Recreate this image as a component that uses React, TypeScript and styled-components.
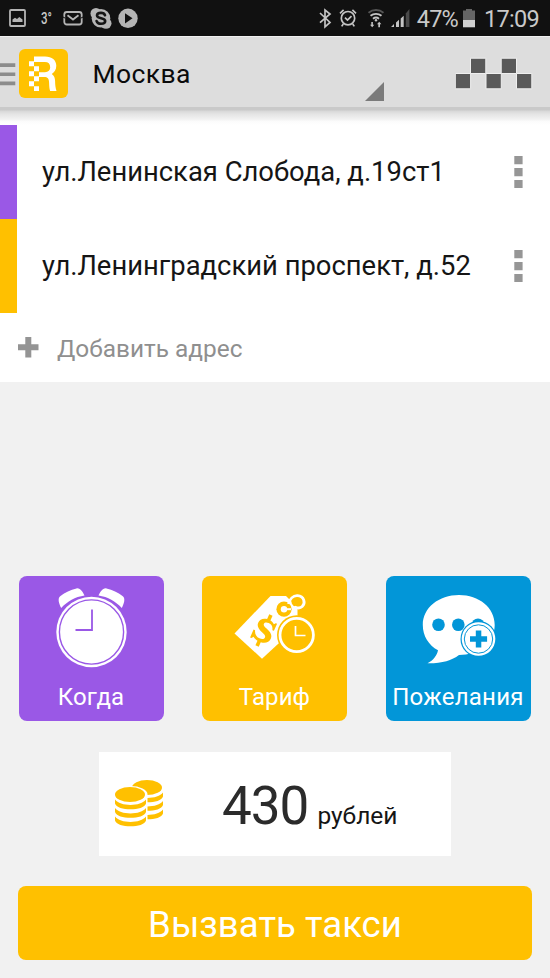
import React from "react";
import styled, { createGlobalStyle } from "styled-components";

const colors = {
  purple: "#9a58e6",
  amber: "#ffc000",
  blue: "#0296d8",
  page: "#f1f1f1",
};

const GlobalStyle = createGlobalStyle`
  * { box-sizing: border-box; }
  body { margin: 0; background: ${colors.page}; font-family: Roboto, "Noto Sans", sans-serif; }
  svg { display: block; flex: none; }
  button { font-family: inherit; border: 0; padding: 0; }
`;

const Screen = styled.div`
  width: 550px;
  height: 978px;
  display: flex;
  flex-direction: column;
  overflow: hidden;
  background: ${colors.page};
`;

const StatusBar = styled.header`
  height: 36px;
  flex: none;
  display: flex;
  align-items: center;
  justify-content: space-between;
  background: #111;
  color: #c9c9c9;
`;

const StatusGroup = styled.div`
  display: flex;
  align-items: center;
  height: 36px;
`;

const StatusText = styled.span<{ $spacing: number; $left: number }>`
  font-size: 23.5px;
  line-height: 36px;
  padding-top: 2px;
  margin-left: ${(p) => p.$left}px;
  letter-spacing: ${(p) => p.$spacing}px;
  white-space: nowrap;
`;

const Temperature = styled.span`
  font-size: 16px;
  width: 10px;
  margin: 1px 12px 0 4px;
  display: flex;
  font-weight: 500;
  transform: scaleX(0.72);
  transform-origin: left center;
`;

const TopBar = styled.nav`
  height: 71px;
  flex: none;
  display: flex;
  align-items: center;
  background: #dddddd;
  border-top: 1px solid #f0f0f0;
`;

const City = styled.div`
  flex: 1;
  height: 70px;
  padding: 5px 0 0 23.5px;
  font-size: 26.5px;
  line-height: 64px;
  letter-spacing: 0.4px;
  color: #0b0b0b;
`;

const DropMark = styled.svg`
  align-self: flex-end;
  margin: 0 71px 6px 0;
`;

const Shade = styled.div`
  height: 18px;
  flex: none;
  background: linear-gradient(#c9c9c9 0 3px, #d8d8d8 4px, #e4e4e4 7px, #ececec 10px, #f4f4f4 13px, #fbfbfb 14px, #fff 18px);
`;

const AddressPanel = styled.section`
  flex: none;
  background: #fff;
`;

const AddressRow = styled.div<{ $stripe: string }>`
  height: 94px;
  display: flex;
  align-items: center;
  justify-content: space-between;
  border-left: 17px solid ${(p) => p.$stripe};
  padding: 0 27px 0 25px;
`;

const Address = styled.span`
  font-size: 27.4px;
  line-height: 94px;
  color: #151515;
  white-space: nowrap;
`;

const AddRow = styled.div`
  height: 69px;
  display: flex;
  align-items: center;
  gap: 18.5px;
  padding-left: 18px;
  color: #8f8f8f;
  font-size: 24.4px;
  line-height: 69px;
`;

const AddLabel = styled.span`
  padding-top: 2px;
`;

const Options = styled.section`
  display: flex;
  justify-content: space-between;
  margin-top: 194px;
  padding: 0 19.5px 0 18.5px;
`;

const Tile = styled.button<{ $color: string }>`
  width: 145px;
  height: 145px;
  border-radius: 8px;
  background: ${(p) => p.$color};
  display: flex;
  flex-direction: column;
  align-items: center;
  color: #fff;
`;

const TileLabel = styled.span<{ $spacing: number }>`
  font-size: 24px;
  line-height: 28px;
  margin-top: 7px;
  letter-spacing: ${(p) => p.$spacing}px;
  white-space: nowrap;
`;

const PriceCard = styled.section`
  width: 352px;
  height: 104px;
  flex: none;
  margin: 31px 0 0 99px;
  padding-left: 15px;
  display: flex;
  align-items: center;
  background: #fff;
`;

const Price = styled.div`
  display: flex;
  align-items: baseline;
  gap: 9px;
  margin: 13px 0 0 57px;
  line-height: 60px;
`;

const Amount = styled.span`
  font-size: 53px;
  color: #2b2b2b;
  letter-spacing: -1px;
`;

const Unit = styled.span`
  font-size: 24.5px;
  color: #151515;
`;

const OrderButton = styled.button`
  width: 514px;
  height: 74px;
  flex: none;
  margin: 30px 0 0 18px;
  padding-top: 3px;
  border-radius: 8px;
  background: ${colors.amber};
  color: #fff;
  font-size: 36.6px;
  line-height: 70px;
`;

const PictureIcon = () => (
  <svg width="38" height="36" viewBox="0 0 38 36">
    <rect x="11" y="10" width="15" height="16" rx="1" fill="none" stroke="#b5b5b5" strokeWidth="1.8" />
    <path d="M13.5 22v-2.5l2.5-1.8 2 1.3 2.3-2 3.2 2.5V22z" fill="#b5b5b5" />
  </svg>
);

const MailIcon = () => (
  <svg width="20" height="36" viewBox="0 0 20 36" fill="none" stroke="#b5b5b5" strokeWidth="1.8">
    <rect x="1.3" y="12" width="17.4" height="12.5" rx="2.5" />
    <path d="M4.5 15.3l5.5 4.2 5.5-4.2" />
    <path d="M0 17l2.3 1.2M20 17l-2.3 1.2" stroke="#111" strokeWidth="1" />
  </svg>
);

const SkypeIcon = () => (
  <svg width="22" height="36" viewBox="0 0 22 36">
    <g fill="#b5b5b5">
      <circle cx="11" cy="18.3" r="9.3" />
      <circle cx="6" cy="13.5" r="5.5" />
      <circle cx="16" cy="23.3" r="5.5" />
    </g>
    <path
      d="M15 15.2c-.7-1.8-2.2-2.3-4-2.3-2.4 0-4 .9-4 2.6 0 3.8 8.2 1.7 8.2 5.5 0 1.8-1.8 2.8-4.2 2.8-2.2 0-3.8-.8-4.4-2.7"
      fill="none"
      stroke="#151515"
      strokeWidth="2.6"
      strokeLinecap="round"
    />
  </svg>
);

const PlayIcon = () => (
  <svg width="20" height="36" viewBox="0 0 20 36">
    <circle cx="10" cy="18.3" r="9.7" fill="#b5b5b5" />
    <path d="M7 13.2v10.2l7.5-5.1z" fill="#111" />
  </svg>
);

const BluetoothIcon = () => (
  <svg width="13" height="36" viewBox="0 0 13 36" fill="none" stroke="#c4c4c4" strokeWidth="1.7">
    <path d="M1 13l10 9.5-5 4.3V10l5 4-10 8.7" />
  </svg>
);

const AlarmIcon = () => (
  <svg width="18" height="36" viewBox="0 0 18 36" fill="none" stroke="#c4c4c4" strokeWidth="1.7">
    <circle cx="9" cy="18.2" r="6.7" />
    <path d="M1 13.3l3.6-3.4M17 13.3l-3.6-3.4M4.3 24l-1.6 2.4M13.7 24l1.6 2.4M6 17.7l2.5 2.4 4-4" />
  </svg>
);

const WifiIcon = () => (
  <svg width="16" height="36" viewBox="0 0 16 36" fill="none">
    <path d="M.5 12.8c4.2-3.6 10.8-3.6 15 0" stroke="#555" strokeWidth="2" />
    <path d="M2.5 15.8c3.2-2.7 7.8-2.7 11 0M5 18.7c1.8-1.5 4.2-1.5 6 0" stroke="#c4c4c4" strokeWidth="1.8" />
    <circle cx="8" cy="20.3" r="1.2" fill="#c4c4c4" />
    <path d="M4.9 22v2.8H6.3L4.2 27.3 2 24.8h1.3V22zM10.3 27.3v-3H9l2.2-2.6 2.2 2.6H12v3z" fill="#c4c4c4" />
  </svg>
);

const SignalIcon = () => (
  <svg width="19" height="36" viewBox="0 0 19 36" fill="#c4c4c4">
    <path d="M0 27l3-3v3zM5 22.4l3-2.6V27H5zM9.7 18.4l3-2.6V27h-3z" />
    <path d="M14.8 13.5L18.4 9v18h-3.6z" fill="#4a4a4a" />
  </svg>
);

const BatteryIcon = () => (
  <svg width="12" height="36" viewBox="0 0 12 36">
    <path d="M0 10.5h3V9h6v1.5h3V20H0z" fill="#656565" />
    <path d="M0 20h12v7.3H0z" fill="#d0d0d0" />
  </svg>
);

const MenuIcon = () => (
  <svg width="19" height="70" viewBox="0 0 19 70" fill="#8c8c8c">
    <path d="M0 26.2h15.3v3.7H0zM0 35.4h15.3v3.7H0zM0 44.6h15.3v3.7H0z" />
  </svg>
);

const AppLogo = () => (
  <svg width="50" height="70" viewBox="0 0 50 70">
    <rect y="12" width="49" height="49" rx="6" fill="#ffc200" />
    <path
      d="M15 19.500h11c7 0 11.300 3.500 11.300 9.300 0 4-2 6.700-4.500 8.100 2.500 1.700 3.200 4 3.300 7.400.1 4 .3 6.400 1.400 9.600h-6.400c-.8-2.700-.9-5.100-1-8.200-.1-4-1.500-5.600-4.900-5.600H20v-4.900h6c3.400 0 5.200-1.900 5.200-4.900 0-3.400-1.900-5.200-5.300-5.200H15z"
      fill="#fff"
    />
    <path
      d="M10 24.200h5v5h-5zM15 29.200h5v5h-5zM10 34.200h5v5h-5zM15 39.200h5v5h-5zM10 44.200h5v5h-5zM15 49.200h5v4.800h-5z"
      fill="#fff"
    />
  </svg>
);

const CheckerIcon = () => (
  <svg width="95" height="70" viewBox="0 0 95 70" fill="#5a5a5a" stroke="#efefef" strokeWidth="1">
    <path d="M15.5 21.2h15.3v15.3H15.500zM46.2 21.2h15.3v15.3H46.2zM.3 36.5h15.3v15.3H.3zM31 36.5h15.3v15.3H31zM61.5 36.5h15.3v15.3H61.5z" />
  </svg>
);

const MoreIcon = () => (
  <svg width="9" height="32" viewBox="0 0 9 32" fill="#969696">
    <path d="M.3 0h8.3v8.2H.3zM.3 12h8.3v8.2H.3zM.3 24h8.3v8H.3z" />
  </svg>
);

const PlusIcon = () => (
  <svg width="20.5" height="20.5" viewBox="0 0 20.5 20.5">
    <path d="M7.3 0h6v7.3h7.2v6h-7.2v7.2h-6v-7.2H0v-6h7.3z" fill="#949494" />
  </svg>
);

const ClockTileIcon = () => (
  <svg width="145" height="100" viewBox="0 0 145 100">
    <g fill="#fff">
      <path d="M42.2 32C40.2 28 38 22.5 41.5 20 46 16.5 51.5 13.5 57.5 12.4c4-.6 6.3 3.8 8 7.2C56 21 48.5 25.5 42.2 32z" />
      <path d="M102.8 32c2-4 4.2-9.5.7-12-4.5-3.5-10-6.5-16-7.6-4-.6-6.3 3.8-8 7.2 9.5 1.4 17 5.9 23.3 12.4z" />
      <circle cx="72.5" cy="56" r="35.2" />
    </g>
    <g fill="none" stroke={colors.purple}>
      <circle cx="72.5" cy="56" r="32.1" strokeWidth="1.4" />
      <path d="M73 33.5v20.5H56.5" strokeWidth="1.8" />
    </g>
  </svg>
);

const TariffTileIcon = () => (
  <svg width="145" height="100" viewBox="0 0 145 100">
    <path d="M32.500 57.500L68.500 20H84l11.500 11.500V50L60 82.700z" fill="#fff" />
    <circle cx="82" cy="33.200" r="7.600" fill={colors.amber} />
    <circle cx="82" cy="33.200" r="3.200" fill="#fff" />
    <path d="M82 33.200h7" stroke="#fff" strokeWidth="2" />
    <ellipse cx="95" cy="26" rx="5.500" ry="4.500" fill={colors.amber} />
    <path d="M86.500 28c1.200-4.500 4.500-8.600 9-8.300 6.700.4 8.300 7.500 4.700 10.900-2.300 2.200-4.800 1.600-7.500.4" fill="none" stroke="#fff" strokeWidth="2.800" />
    <g transform="translate(62 54.500) rotate(24)" fill={colors.amber}>
      <path d="M-1.800-17h3.600v5.300c2 .3 3.500 1 4.700 2l1.200-1.800h1.500v7.800H7.500C6.700-6.800 4.600-8.700 1.300-8.700c-2.500 0-4.100 1-4.100 2.600 0 1.700 1.500 2.300 4.300 3.200C6.500-1.300 9.500.7 9.500 4.700c0 3.800-2.800 6.700-7.700 7.300v5h-3.600v-5c-2-.2-3.800-.9-5.300-2l-1.200 2h-1.600V3.400h1.700C-7.200 6.800-4.500 9-1 9c2.800 0 4.700-1.100 4.700-3 0-1.800-1.700-2.500-4.800-3.600C-5.700.8-8.500-1.300-8.500-4.800c0-3.800 2.700-6.400 6.700-6.900z" />
    </g>
    <circle cx="94.700" cy="59" r="19.700" fill={colors.amber} />
    <circle cx="94.700" cy="59" r="16.700" fill="none" stroke="#fff" strokeWidth="2.800" />
    <path d="M93.500 50v9.500h10" fill="none" stroke="#fff" strokeWidth="1.700" />
  </svg>
);

const WishesTileIcon = () => (
  <svg width="145" height="100" viewBox="0 0 145 100">
    <path
      d="M73 19c20 0 35.7 12.5 35.7 30S92 79 73 79c-7.5 5.5-17 8.5-31.5 8.3 6-3 9.5-7.8 10.5-13C42.5 69 36.8 60 36.8 49 36.8 31.5 53 19 73 19z"
      fill="#fff"
    />
    <g fill={colors.blue}>
      <circle cx="52.5" cy="48.7" r="6.3" />
      <circle cx="72.3" cy="48.7" r="6.3" />
      <circle cx="92" cy="48.7" r="6.3" />
      <circle cx="92.5" cy="63" r="18" />
    </g>
    <circle cx="92.5" cy="63" r="16.8" fill="#fff" />
    <circle cx="92.5" cy="63" r="14.2" fill="none" stroke={colors.blue} strokeWidth="1" />
    <path d="M89.8 54.5h5.5v5.8h5.8v5.5h-5.8v5.7h-5.5v-5.7H84v-5.5h5.8z" fill={colors.blue} />
  </svg>
);

const CoinStack = ({ x, y, layers }: { x: number; y: number; layers: number }) => (
  <g transform={`translate(${x} ${y})`}>
    <path d={`M-1.5 7.5a17 8.5 0 0 1 34 0V${9 + layers * 8}a17 8.5 0 0 1-34 0z`} fill="#fff" />
    <ellipse cx="15" cy="7.5" rx="15" ry="7.5" fill={colors.amber} />
    {Array.from({ length: layers }, (_, i) => (
      <path
        key={i}
        d={`M0 ${12.5 + i * 8.5}c5 7.2 26 7.2 31 0v4c-2 7.8-29 7.8-31 0z`}
        fill={colors.amber}
      />
    ))}
  </g>
);

const CoinsIcon = () => (
  <svg width="51" height="50" viewBox="0 0 51 50">
    <CoinStack x={18} y={1} layers={3} />
    <CoinStack x={1} y={8} layers={3} />
  </svg>
);

const Cluster = styled.div<{ $left?: number }>`
  display: flex;
  margin-left: ${(p) => p.$left ?? 0}px;
`;

export default function App() {
  return (
    <>
      <GlobalStyle />
      <Screen>
        <StatusBar>
          <StatusGroup>
            <Cluster $left={-1}><PictureIcon /></Cluster>
            <Temperature>3°</Temperature>
            <MailIcon />
            <Cluster $left={7}><SkypeIcon /></Cluster>
            <Cluster $left={6}><PlayIcon /></Cluster>
          </StatusGroup>
          <StatusGroup>
            <BluetoothIcon />
            <Cluster $left={7}><AlarmIcon /></Cluster>
            <Cluster $left={11}><WifiIcon /></Cluster>
            <Cluster $left={7}><SignalIcon /></Cluster>
            <StatusText $spacing={-0.8} $left={7}>47%</StatusText>
            <Cluster $left={5}><BatteryIcon /></Cluster>
            <StatusText $spacing={-0.7} $left={9}>17:09</StatusText>
            <Cluster $left={11} />
          </StatusGroup>
        </StatusBar>
        <TopBar>
          <MenuIcon />
          <AppLogo />
          <City>Москва</City>
          <DropMark width="19" height="19" viewBox="0 0 19 19">
            <path d="M19 0v19H0z" fill="#7b7b7b" />
          </DropMark>
          <CheckerIcon />
        </TopBar>
        <Shade />
        <AddressPanel>
          <AddressRow $stripe={colors.purple}>
            <Address>ул.Ленинская Слобода, д.19ст1</Address>
            <MoreIcon />
          </AddressRow>
          <AddressRow $stripe={colors.amber}>
            <Address>ул.Ленинградский проспект, д.52</Address>
            <MoreIcon />
          </AddressRow>
          <AddRow>
            <PlusIcon />
            <AddLabel>Добавить адрес</AddLabel>
          </AddRow>
        </AddressPanel>
        <Options>
          <Tile $color={colors.purple}>
            <ClockTileIcon />
            <TileLabel $spacing={0.1}>Когда</TileLabel>
          </Tile>
          <Tile $color={colors.amber}>
            <TariffTileIcon />
            <TileLabel $spacing={0.1}>Тариф</TileLabel>
          </Tile>
          <Tile $color={colors.blue}>
            <WishesTileIcon />
            <TileLabel $spacing={0.25}>Пожелания</TileLabel>
          </Tile>
        </Options>
        <PriceCard>
          <CoinsIcon />
          <Price>
            <Amount>430</Amount>
            <Unit>рублей</Unit>
          </Price>
        </PriceCard>
        <OrderButton>Вызвать такси</OrderButton>
      </Screen>
    </>
  );
}
